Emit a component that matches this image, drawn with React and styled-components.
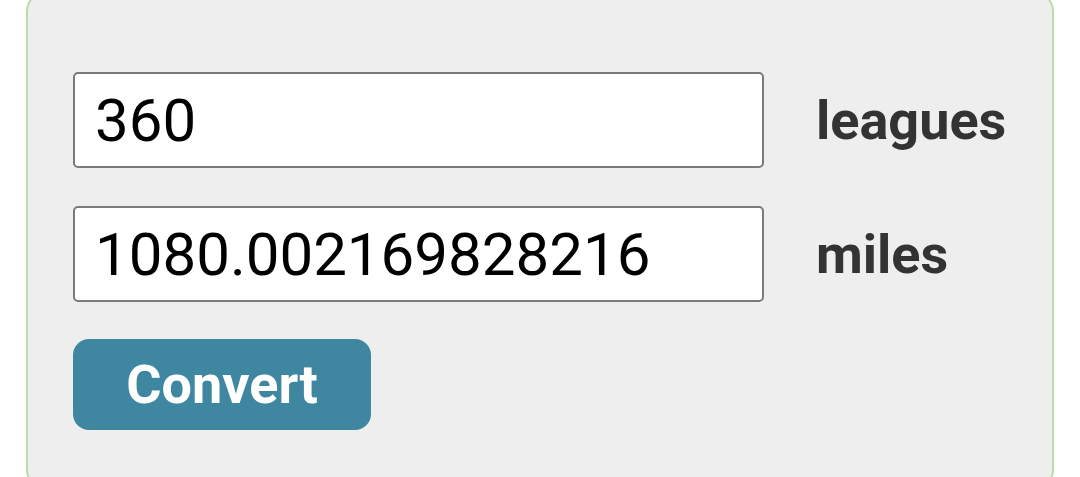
import React, { useState } from "react";
import styled, { createGlobalStyle } from "styled-components";

const GlobalStyle = createGlobalStyle`
  html, body {
    margin: 0;
    padding: 0;
    background: #ffffff;
    font-family: Roboto, "Liberation Sans", sans-serif;
    overflow: hidden;
  }
`;

const Panel = styled.div`
  box-sizing: border-box;
  width: 1028px;
  margin: -10px 0 0 26px;
  padding: 80px 0 60px 45px;
  background: #eeeeee;
  border: 2px solid #b9dcac;
  border-radius: 22px;
  display: flex;
  flex-direction: column;
  gap: 38px;
`;

const Row = styled.div`
  display: flex;
  align-items: center;
  gap: 52px;
`;

const Field = styled.input`
  box-sizing: border-box;
  width: 691px;
  height: 96px;
  padding: 0 20px;
  margin: 0;
  border: 2px solid #7a7a7a;
  border-radius: 5px;
  background: #ffffff;
  color: #000000;
  font-family: Roboto, "Liberation Sans", sans-serif;
  font-size: 60px;
  outline: none;
`;

const Unit = styled.span`
  font-size: 54px;
  font-weight: 700;
  color: #333333;
`;

const Button = styled.button`
  align-self: flex-start;
  box-sizing: border-box;
  width: 298px;
  height: 91px;
  margin-top: -1px;
  border: none;
  border-radius: 16px;
  background: #3f87a0;
  color: #ffffff;
  font-family: Roboto, "Liberation Sans", sans-serif;
  font-size: 54px;
  font-weight: 700;
  cursor: pointer;
`;

export default function App() {
  const [leagues, setLeagues] = useState("360");
  const [miles, setMiles] = useState("1080.002169828216");

  const convert = () => {
    const v = parseFloat(leagues);
    if (!isNaN(v)) setMiles(String(v * 3.0000060273006));
  };

  return (
    <>
      <GlobalStyle />
      <Panel>
        <Row>
          <Field value={leagues} onChange={(e) => setLeagues(e.target.value)} />
          <Unit>leagues</Unit>
        </Row>
        <Row>
          <Field value={miles} onChange={(e) => setMiles(e.target.value)} />
          <Unit>miles</Unit>
        </Row>
        <Button onClick={convert}>Convert</Button>
      </Panel>
    </>
  );
}
